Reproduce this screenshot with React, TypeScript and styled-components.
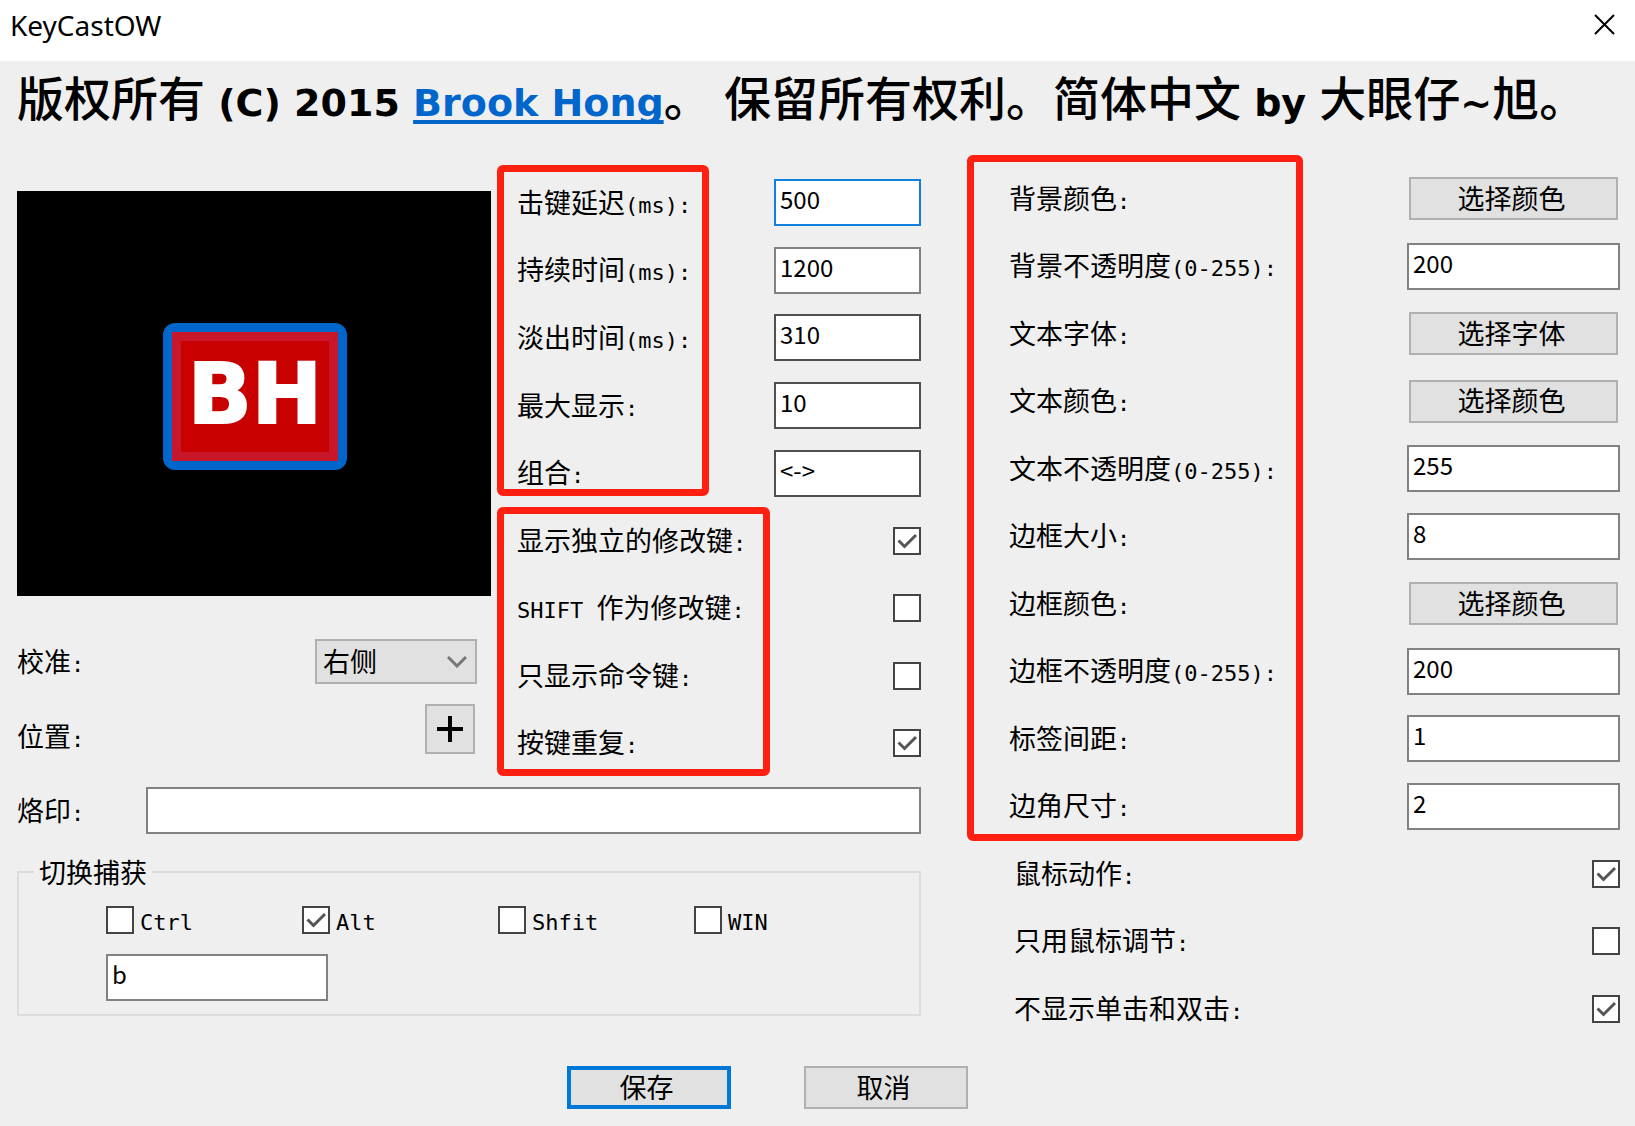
import React, { useId } from 'react';
import styled, { createGlobalStyle } from 'styled-components';

const cjk = '"Noto Sans CJK SC", sans-serif';
const mono = `"DejaVu Sans Mono", ${cjk}`;

const GlobalStyle = createGlobalStyle`
  *, *::before, *::after { box-sizing: border-box; }
  body {
    margin: 0;
    background: #efefef;
    color: #000;
    font: 27px/30px ${cjk};
  }
  input, button, select { font: inherit; color: inherit; margin: 0; border-radius: 0; }
`;

const Dialog = styled.main`
  min-height: 100vh;
  display: flex;
  flex-direction: column;
`;

const TitleBar = styled.header`
  display: flex;
  justify-content: space-between;
  align-items: flex-start;
  height: 61px;
  padding: 6px 20px 0 10px;
  background: #fff;
`;

const Title = styled.h1`
  margin: 0;
  font: 400 28px/38px "Noto Sans", sans-serif;
`;

const CloseButton = styled.button`
  display: flex;
  padding: 8px 0;
  border: 0;
  background: none;
`;

const Copyright = styled.p`
  margin: 0;
  padding: 0 17px;
  height: 104px;
  font: 500 47px/70px ${cjk};
  white-space: nowrap;
`;

const Wide = styled.span`
  font-family: "DejaVu Sans", sans-serif;
  font-weight: 700;
  font-size: 38px;
`;

const AuthorLink = styled.a`
  color: #0066cc;
  text-decoration: underline;
  text-decoration-thickness: 4px;
  text-underline-offset: 4px;
  text-decoration-skip-ink: none;
`;

const Panels = styled.form`
  display: grid;
  grid-template-columns: minmax(0, 904fr) minmax(0, 611fr);
  column-gap: 88px;
  padding: 0 15px 0 17px;
`;

const LeftPanel = styled.section`
  padding-top: 4px;
`;

const TopArea = styled.div`
  display: grid;
  grid-template-columns: minmax(0, 474fr) minmax(0, 404fr);
  column-gap: 26px;
`;

const Preview = styled.div`
  display: flex;
  align-items: center;
  justify-content: center;
  height: 405px;
  margin-top: 22px;
  padding: 6px 0 0 2px;
  background: #000;
`;

const Badge = styled.div`
  width: 184px;
  height: 147px;
  border: 9px solid #0066cc;
  border-radius: 12px;
  background: #0066cc;
`;

const BadgeFace = styled.div`
  height: 100%;
  border: 9px solid #c8172b;
  background: #c80000;
  color: #fff;
  font: 700 84px/106px "DejaVu Sans", sans-serif;
  -webkit-text-stroke: 2px #fff;
  text-align: center;
`;

const PlacementRow = styled.div<{ $gap: number }>`
  display: flex;
  justify-content: space-between;
  align-items: ${p => (p.$gap > 30 ? 'center' : 'flex-end')};
  margin-top: ${p => p.$gap}px;
  padding-right: 14px;
`;

const Group = styled.div<{ $height: number; $indent?: number }>`
  position: relative;
  display: grid;
  grid-auto-rows: 1fr;
  height: ${p => p.$height}px;
  padding-left: ${p => p.$indent ?? 0}px;
`;

const Highlight = styled.div<{ $width: number; $inset: string }>`
  position: absolute;
  inset: ${p => p.$inset};
  width: ${p => p.$width}px;
  border: 7px solid #ff2012;
  border-radius: 6px;
  pointer-events: none;
`;

const Row = styled.div`
  display: flex;
  align-items: center;
  justify-content: space-between;
`;

const LabelText = styled.label`
  padding-top: 2px;
  white-space: pre;
  line-height: 28px;
`;

const Latin = styled.span`
  font-family: ${mono};
  font-size: 22px;
`;

const TextBox = styled.input<{ $width?: number; $edge?: string }>`
  width: ${p => (p.$width ? p.$width + 'px' : '100%')};
  height: 47px;
  padding: 0 4px 8px;
  border: 2px solid ${p => p.$edge ?? '#828282'};
  background: #fff;
  font-size: 24px;
  outline: none;
`;

const PushButton = styled.button<{ $width: number; $primary?: boolean }>`
  width: ${p => p.$width}px;
  height: 43px;
  padding: 0 4px 2px 0;
  border: ${p => (p.$primary ? '4px solid #0078d7' : '2px solid #b0b0b0')};
  background: #e1e1e1;
  line-height: 28px;
`;

const ChooseButton = styled(PushButton)`
  margin-right: 2px;
`;

const PlusButton = styled.button`
  display: grid;
  place-items: center;
  width: 50px;
  height: 50px;
  margin-right: 2px;
  padding: 0;
  border: 2px solid #b0b0b0;
  background: #e1e1e1;
`;

const SelectWrap = styled.div`
  display: grid;
  align-items: center;
  width: 162px;
  & > * { grid-area: 1 / 1; }
  svg { justify-self: end; margin-right: 10px; pointer-events: none; }
`;

const Select = styled.select`
  appearance: none;
  width: 100%;
  height: 45px;
  padding: 0 6px 2px;
  border: 2px solid #b0b0b0;
  background: #e1e1e1;
`;

const TickWrap = styled.span`
  display: grid;
  place-items: center;
  width: 28px;
  height: 28px;
  & > * { grid-area: 1 / 1; }
  svg { visibility: hidden; pointer-events: none; }
  input:checked + svg { visibility: visible; }
`;

const TickInput = styled.input`
  appearance: none;
  width: 28px;
  height: 28px;
  border: 2px solid #444;
  background: #fff;
`;

const WatermarkRow = styled.div`
  display: grid;
  grid-template-columns: 129px 1fr;
  align-items: center;
  height: 67px;
`;

const CaptureGroup = styled.fieldset`
  min-width: 0;
  margin: 13px 0 0;
  padding: 16px 0 13px 87px;
  border: 2px solid #dcdcdc;
`;

const Legend = styled.legend`
  margin-left: -72px;
  padding: 0 5px;
`;

const KeyRow = styled.div`
  display: grid;
  grid-template-columns: repeat(4, minmax(0, 196px));
  margin-bottom: 17px;
`;

const KeyOption = styled.div`
  display: flex;
  align-items: center;
  gap: 6px;
`;

const Footer = styled.footer`
  display: flex;
  justify-content: center;
  gap: 73px;
  padding: 23px 118px 17px 17px;
`;

const Label = ({ text, id }: { text: string; id: string }) => (
  <LabelText htmlFor={id}>
    {text
      .split(/([\x20-\x7e]+)/)
      .filter(Boolean)
      .map((part, i) => (/^[\x20-\x7e]/.test(part) ? <Latin key={i}>{part}</Latin> : part))}
  </LabelText>
);

const Tick = ({ id, checked }: { id: string; checked?: boolean }) => (
  <TickWrap>
    <TickInput type="checkbox" id={id} defaultChecked={checked} />
    <svg width="22" height="22" viewBox="0 0 22 22" fill="none" stroke="#555" strokeWidth="3">
      <path d="M2.5 10.5 8.5 16.5 20 5" />
    </svg>
  </TickWrap>
);

type Setting = {
  label: string;
  value?: string;
  edge?: string;
  action?: string;
  checked?: boolean;
};

const SettingRow = ({ item, width }: { item: Setting; width: number }) => {
  const id = useId();
  return (
    <Row>
      <Label text={item.label} id={id} />
      {item.action ? (
        <ChooseButton type="button" id={id} $width={width - 4}>{item.action}</ChooseButton>
      ) : item.value !== undefined ? (
        <TextBox id={id} defaultValue={item.value} $width={width} $edge={item.edge} />
      ) : (
        <Tick id={id} checked={item.checked} />
      )}
    </Row>
  );
};

const timing: Setting[] = [
  { label: '击键延迟(ms):', value: '500', edge: '#1080dc' },
  { label: '持续时间(ms):', value: '1200' },
  { label: '淡出时间(ms):', value: '310', edge: '#505050' },
  { label: '最大显示:', value: '10', edge: '#505050' },
  { label: '组合:', value: '<->', edge: '#505050' },
];

const keyOptions: Setting[] = [
  { label: '显示独立的修改键:', checked: true },
  { label: 'SHIFT 作为修改键:' },
  { label: '只显示命令键:' },
  { label: '按键重复:', checked: true },
];

const appearance: Setting[] = [
  { label: '背景颜色:', action: '选择颜色' },
  { label: '背景不透明度(0-255):', value: '200' },
  { label: '文本字体:', action: '选择字体' },
  { label: '文本颜色:', action: '选择颜色' },
  { label: '文本不透明度(0-255):', value: '255' },
  { label: '边框大小:', value: '8' },
  { label: '边框颜色:', action: '选择颜色' },
  { label: '边框不透明度(0-255):', value: '200' },
  { label: '标签间距:', value: '1' },
  { label: '边角尺寸:', value: '2' },
];

const mouse: Setting[] = [
  { label: '鼠标动作:', checked: true },
  { label: '只用鼠标调节:' },
  { label: '不显示单击和双击:', checked: true },
];

const modifiers = [
  { name: 'Ctrl', checked: false },
  { name: 'Alt', checked: true },
  { name: 'Shfit', checked: false },
  { name: 'WIN', checked: false },
];

export default function App() {
  return (
    <Dialog>
      <GlobalStyle />
      <TitleBar>
        <Title>KeyCastOW</Title>
        <CloseButton type="button" aria-label="关闭">
          <svg width="21" height="21" viewBox="0 0 21 21" stroke="#000" strokeWidth="2">
            <path d="M1 1 20 20M20 1 1 20" />
          </svg>
        </CloseButton>
      </TitleBar>
      <Copyright>
        版权所有<Wide> (C) 2015 <AuthorLink href="#author">Brook Hong</AuthorLink></Wide>。
        <Wide> </Wide>保留所有权利。简体中文<Wide> by </Wide>大眼仔<Wide>~</Wide>旭。
      </Copyright>
      <Panels id="settings" onSubmit={e => e.preventDefault()}>
        <LeftPanel>
          <TopArea>
            <div>
              <Preview>
                <Badge>
                  <BadgeFace>BH</BadgeFace>
                </Badge>
              </Preview>
              <PlacementRow $gap={43}>
                <Label text="校准:" id="align" />
                <SelectWrap>
                  <Select id="align" defaultValue="right">
                    <option value="left">左侧</option>
                    <option value="right">右侧</option>
                  </Select>
                  <svg width="20" height="12" viewBox="0 0 20 12" fill="none" stroke="#777" strokeWidth="3">
                    <path d="M1 1 10 10 19 1" />
                  </svg>
                </SelectWrap>
              </PlacementRow>
              <PlacementRow $gap={20}>
                <Label text="位置:" id="position" />
                <PlusButton type="button" id="position">
                  <svg width="26" height="26" viewBox="0 0 26 26" stroke="#000" strokeWidth="4">
                    <path d="M13 0V26M0 13H26" />
                  </svg>
                </PlusButton>
              </PlacementRow>
            </div>
            <div>
              <Group $height={338}>
                {timing.map(s => <SettingRow key={s.label} item={s} width={147} />)}
                <Highlight $width={212} $inset="-4px auto 11px -20px" />
              </Group>
              <Group $height={270}>
                {keyOptions.map(s => <SettingRow key={s.label} item={s} width={147} />)}
                <Highlight $width={273} $inset="0 auto 1px -20px" />
              </Group>
            </div>
          </TopArea>
          <WatermarkRow>
            <Label text="烙印:" id="watermark" />
            <TextBox id="watermark" />
          </WatermarkRow>
          <CaptureGroup>
            <Legend>切换捕获</Legend>
            <KeyRow>
              {modifiers.map(m => (
                <KeyOption key={m.name}>
                  <Tick id={m.name} checked={m.checked} />
                  <Label text={m.name} id={m.name} />
                </KeyOption>
              ))}
            </KeyRow>
            <TextBox aria-label="切换捕获" defaultValue="b" $width={222} />
          </CaptureGroup>
        </LeftPanel>
        <section>
          <Group $height={675}>
            {appearance.map(s => <SettingRow key={s.label} item={s} width={213} />)}
            <Highlight $width={336} $inset="-10px auto -1px -42px" />
          </Group>
          <Group $height={203} $indent={5}>
            {mouse.map(s => <SettingRow key={s.label} item={s} width={213} />)}
          </Group>
        </section>
      </Panels>
      <Footer>
        <PushButton type="submit" form="settings" $width={164} $primary>保存</PushButton>
        <PushButton type="button" $width={164}>取消</PushButton>
      </Footer>
    </Dialog>
  );
}
